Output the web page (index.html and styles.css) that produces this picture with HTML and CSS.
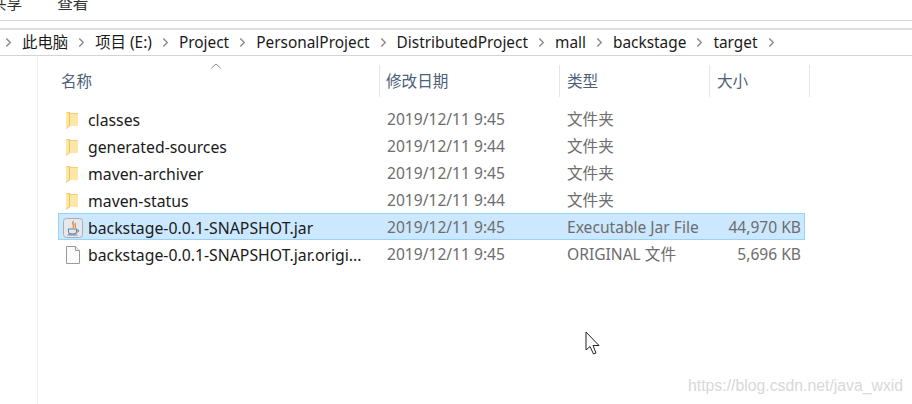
FILE: index.html
```html
<!DOCTYPE html>
<html>
<head>
  <title>target</title>
  <link rel="stylesheet" href="styles.css">
</head>
<body>
  <svg class="defs" width="0" height="0">
    <symbol id="sep" viewBox="0 0 8 12">
      <path d="M1.5 1.5 L6 6 L1.5 10.5" fill="none" stroke="#8a8a8a" stroke-width="1.6"/>
    </symbol>
    <symbol id="folder" viewBox="0 0 12 18">
      <path d="M0 1 H4 L5 2 H12 V15 H4 L0 18 Z" fill="#f3cf74"/>
      <path d="M0 1 L3 3 H12 V15 H4 L0 18 Z" fill="#fce7a6"/>
      <path d="M3.500 3 V14.500 L0.500 17" fill="none" stroke="#eec262"/>
    </symbol>
  </svg>

  <div class="ribbon">
    <span class="tab tab-share">共享</span>
    <span class="tab tab-view">查看</span>
  </div>

  <div class="address">
    <svg class="crumb-sep"><use href="#sep"/></svg><span>此电脑</span>
    <svg class="crumb-sep"><use href="#sep"/></svg><span>项目 (E:)</span>
    <svg class="crumb-sep"><use href="#sep"/></svg><span>Project</span>
    <svg class="crumb-sep"><use href="#sep"/></svg><span>PersonalProject</span>
    <svg class="crumb-sep"><use href="#sep"/></svg><span>DistributedProject</span>
    <svg class="crumb-sep"><use href="#sep"/></svg><span>mall</span>
    <svg class="crumb-sep"><use href="#sep"/></svg><span>backstage</span>
    <svg class="crumb-sep"><use href="#sep"/></svg><span>target</span>
    <svg class="crumb-sep"><use href="#sep"/></svg>
  </div>

  <div class="pane">
    <div class="head">
      <div class="col-name head-cell">名称
        <svg class="sort" width="10" height="6" viewBox="0 0 10 6"><path d="M0.500 5 L5 1 L9.500 5" fill="none" stroke="#8a8a8a"/></svg>
      </div>
      <div class="col-date head-cell">修改日期</div>
      <div class="col-type head-cell">类型</div>
      <div class="col-size head-cell last">大小</div>
    </div>

    <div class="row">
      <div class="col-name name"><svg class="ico-folder"><use href="#folder"/></svg>classes</div>
      <div class="col-date">2019/12/11 9:45</div>
      <div class="col-type">文件夹</div>
      <div class="col-size"></div>
    </div>
    <div class="row">
      <div class="col-name name"><svg class="ico-folder"><use href="#folder"/></svg>generated-sources</div>
      <div class="col-date">2019/12/11 9:44</div>
      <div class="col-type">文件夹</div>
      <div class="col-size"></div>
    </div>
    <div class="row">
      <div class="col-name name"><svg class="ico-folder"><use href="#folder"/></svg>maven-archiver</div>
      <div class="col-date">2019/12/11 9:45</div>
      <div class="col-type">文件夹</div>
      <div class="col-size"></div>
    </div>
    <div class="row">
      <div class="col-name name"><svg class="ico-folder"><use href="#folder"/></svg>maven-status</div>
      <div class="col-date">2019/12/11 9:44</div>
      <div class="col-type">文件夹</div>
      <div class="col-size"></div>
    </div>
    <div class="row selected">
      <div class="col-name name">
        <svg class="ico-file" width="20" height="20" viewBox="0 0 20 20">
          <rect x="0.500" y="0.500" width="19" height="19" rx="3" fill="#e6e8ec" stroke="#a9aeb6"/>
          <path d="M10.500 3 C8 6 12 7 10 10 M12.500 5 C11 7 13.500 8 12 10" fill="none" stroke="#dd8a4a" stroke-width="1.300"/>
          <path d="M5.500 11 H13.500 V14 C13.500 15.500 12 16 9.500 16 C7 16 5.500 15.500 5.500 14 Z" fill="none" stroke="#6f8299" stroke-width="1.100"/>
          <path d="M13.500 12 H15.500 V13.500 L13.500 14.500 M4.500 17 H14.500" fill="none" stroke="#6f8299"/>
        </svg>backstage-0.0.1-SNAPSHOT.jar
      </div>
      <div class="col-date">2019/12/11 9:45</div>
      <div class="col-type">Executable Jar File</div>
      <div class="col-size">44,970 KB</div>
    </div>
    <div class="row">
      <div class="col-name name">
        <svg class="ico-file" width="20" height="20" viewBox="0 0 20 20">
          <path d="M3.500 1.500 H12.500 L16.500 5.500 V18.500 H3.500 Z" fill="#fbfbfb" stroke="#9a9a9a"/>
          <path d="M12.500 1.500 V5.500 H16.500" fill="#f0f0f0" stroke="#9a9a9a"/>
        </svg>backstage-0.0.1-SNAPSHOT.jar.origi...
      </div>
      <div class="col-date">2019/12/11 9:45</div>
      <div class="col-type">ORIGINAL 文件</div>
      <div class="col-size">5,696 KB</div>
    </div>
  </div>

  <svg class="cursor" width="16" height="25" viewBox="0 0 16 25">
    <path d="M1 1 V19 L5 15.500 L8.500 23 L11 22 L8 14.500 H14 Z" fill="#fff" stroke="#222" stroke-width="1"/>
  </svg>
  <div class="watermark">https://blog.csdn.net/java_wxid</div>
</body>
</html>
```

FILE: styles.css
```css
html, body {
  margin: 0;
  padding: 0;
  height: 100%;
  overflow: hidden;
  background-color: #fff;
}
body {
  position: relative;
  font-family: "Noto Sans", "Noto Sans CJK SC", sans-serif;
  font-size: 15.6px;
  color: #1a1a1a;
}
.defs {
  position: absolute;
}
.ribbon {
  height: 20px;
  border-bottom: 1px solid #d8d8d8;
  overflow: hidden;
  display: flex;
  align-items: flex-end;
}
.tab {
  line-height: 20px;
  margin-bottom: 7px;
  color: #333;
}
.tab-share {
  margin-left: -9px;
}
.tab-view {
  margin-left: 35px;
}
.address {
  margin-top: 7px;
  height: 25px;
  border-top: 2px solid #dedede;
  border-bottom: 1px solid #d4d4d4;
  display: flex;
  align-items: center;
  padding-left: 5px;
  font-size: 15.4px;
}
.address span {
  margin: 0 10px;
  white-space: nowrap;
  line-height: 22px;
}
.crumb-sep {
  width: 7px;
  height: 11px;
  flex: none;
}
.pane {
  margin-left: 37px;
  border-left: 1px solid #f0f0f0;
  padding-left: 20px;
  height: 348px;
  box-sizing: border-box;
}
.head {
  display: flex;
  height: 32px;
  padding-top: 9px;
  margin-bottom: 8px;
  color: #4c607a;
}
.head-cell {
  border-right: 1px solid #e5e5e5;
  line-height: 33px;
  position: relative;
  padding-left: 3px;
}
.head-cell.col-date {
  padding-left: 6px;
}
.head-cell.col-type {
  padding-left: 7px;
}
.head-cell.last {
  width: 100px;
  text-align: left;
  padding-left: 7px;
}
.sort {
  position: absolute;
  left: 153px;
  top: -2px;
}
.row {
  display: flex;
  height: 27px;
  line-height: 27px;
  width: 747px;
  border: 1px solid transparent;
  box-sizing: border-box;
  color: #6d6d6d;
}
.row.selected {
  background-color: #cce8ff;
  border-color: #99d1ff;
}
.col-name {
  width: 322px;
  flex: none;
  padding-left: 3px;
  box-sizing: border-box;
  white-space: nowrap;
}
.col-date {
  width: 180px;
  flex: none;
  padding-left: 6px;
  box-sizing: border-box;
}
.col-type {
  width: 150px;
  flex: none;
  padding-left: 6px;
  box-sizing: border-box;
}
.col-size {
  width: 94px;
  flex: none;
  text-align: right;
  padding-right: 4px;
  box-sizing: border-box;
}
.name {
  color: #1a1a1a;
  font-size: 15.8px;
  display: flex;
  align-items: center;
  padding-top: 2px;
  height: 27px;
}
.ico-folder {
  width: 12px;
  height: 18px;
  margin: -2px 10px 0 4px;
  flex: none;
}
.ico-file {
  margin: -2px 5px 0 1px;
  flex: none;
}
.cursor {
  position: absolute;
  left: 585px;
  top: 331px;
}
.watermark {
  position: absolute;
  left: 688px;
  top: 377px;
  font-family: "Liberation Sans", sans-serif;
  font-size: 15.8px;
  color: #d8d8d8;
}
```
